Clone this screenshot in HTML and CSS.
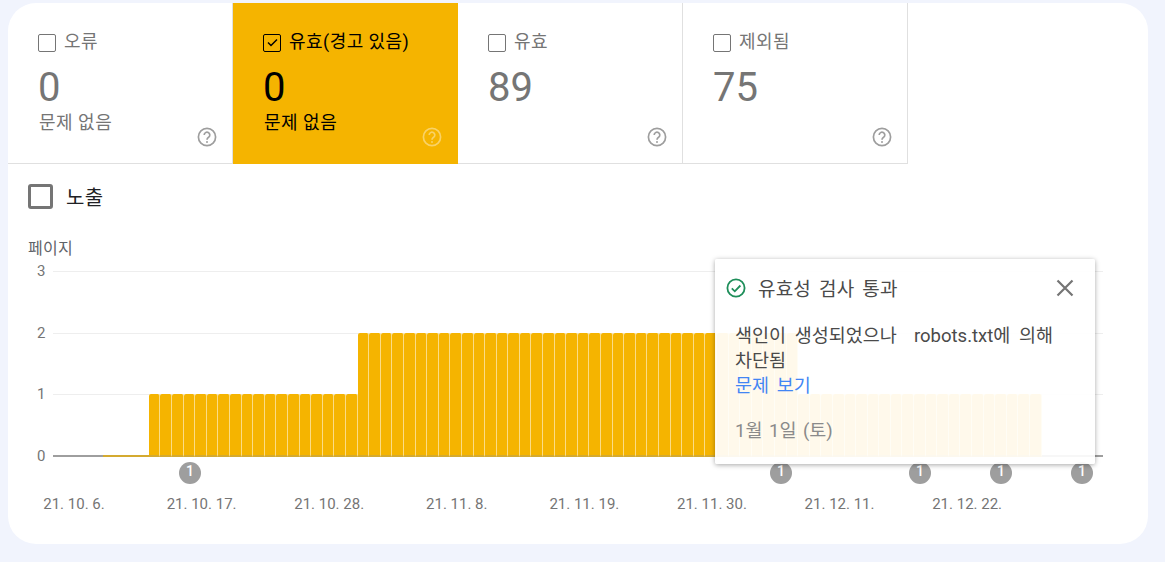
FILE: index.html
```html
<!DOCTYPE html>
<html lang="ko">
<head>
    <meta charset="UTF-8">
    <title>색인 생성 범위</title>
    <link rel="stylesheet" href="styles.css">
</head>
<body>
    <main class="report-card">
        <section class="tiles">
            <div class="tile">
                <div class="tile-title"><span class="check"></span>오류</div>
                <div class="tile-count">0</div>
                <div class="tile-note">문제 없음</div>
                <svg class="help" viewBox="0 0 20 20"><circle cx="10" cy="10" r="8.6"/><path d="M7.2 8a2.8 2.8 0 1 1 4.4 2.3c-1 .7-1.6 1.2-1.6 2.4"/><circle class="dot" cx="10" cy="15" r="1"/></svg>
            </div>
            <div class="tile tile-active">
                <div class="tile-title"><span class="check"><svg viewBox="0 0 15 15"><path d="M3 7.5l3 3 6-6"/></svg></span>유효(경고 있음)</div>
                <div class="tile-count">0</div>
                <div class="tile-note">문제 없음</div>
                <svg class="help" viewBox="0 0 20 20"><circle cx="10" cy="10" r="8.6"/><path d="M7.2 8a2.8 2.8 0 1 1 4.4 2.3c-1 .7-1.6 1.2-1.6 2.4"/><circle class="dot" cx="10" cy="15" r="1"/></svg>
            </div>
            <div class="tile">
                <div class="tile-title"><span class="check"></span>유효</div>
                <div class="tile-count">89</div>
                <svg class="help" viewBox="0 0 20 20"><circle cx="10" cy="10" r="8.6"/><path d="M7.2 8a2.8 2.8 0 1 1 4.4 2.3c-1 .7-1.6 1.2-1.6 2.4"/><circle class="dot" cx="10" cy="15" r="1"/></svg>
            </div>
            <div class="tile">
                <div class="tile-title"><span class="check"></span>제외됨</div>
                <div class="tile-count">75</div>
                <svg class="help" viewBox="0 0 20 20"><circle cx="10" cy="10" r="8.6"/><path d="M7.2 8a2.8 2.8 0 1 1 4.4 2.3c-1 .7-1.6 1.2-1.6 2.4"/><circle class="dot" cx="10" cy="15" r="1"/></svg>
            </div>
        </section>

        <label class="metric"><span class="metric-box"></span>노출</label>

        <section class="chart">
            <div class="axis-title">페이지</div>
            <div class="chart-body">
                <div class="y-labels">
                    <span>3</span>
                    <span>2</span>
                    <span>1</span>
                    <span>0</span>
                </div>
                <div class="plot">
                    <div class="grid-row"></div>
                    <div class="grid-row"></div>
                    <div class="grid-row"></div>
                    <div class="bars">
                        <i class="bar flat"></i><i class="bar flat"></i><i class="bar flat"></i><i class="bar flat"></i>
                        <i class="bar one"></i><i class="bar one"></i><i class="bar one"></i><i class="bar one"></i><i class="bar one"></i><i class="bar one"></i>
                        <i class="bar one"></i><i class="bar one"></i><i class="bar one"></i><i class="bar one"></i><i class="bar one"></i><i class="bar one"></i>
                        <i class="bar one"></i><i class="bar one"></i><i class="bar one"></i><i class="bar one"></i><i class="bar one"></i><i class="bar one"></i>
                        <i class="bar two"></i><i class="bar two"></i><i class="bar two"></i><i class="bar two"></i><i class="bar two"></i><i class="bar two"></i><i class="bar two"></i><i class="bar two"></i>
                        <i class="bar two"></i><i class="bar two"></i><i class="bar two"></i><i class="bar two"></i><i class="bar two"></i><i class="bar two"></i><i class="bar two"></i><i class="bar two"></i>
                        <i class="bar two"></i><i class="bar two"></i><i class="bar two"></i><i class="bar two"></i><i class="bar two"></i><i class="bar two"></i><i class="bar two"></i><i class="bar two"></i>
                        <i class="bar two"></i><i class="bar two"></i><i class="bar two"></i><i class="bar two"></i><i class="bar two"></i><i class="bar two"></i><i class="bar two"></i><i class="bar two"></i>
                        <i class="bar two"></i><i class="bar two"></i><i class="bar two"></i><i class="bar two"></i><i class="bar two"></i><i class="bar two"></i>
                        <i class="bar one"></i><i class="bar one"></i><i class="bar one"></i><i class="bar one"></i><i class="bar one"></i><i class="bar one"></i><i class="bar one"></i>
                        <i class="bar one"></i><i class="bar one"></i><i class="bar one"></i><i class="bar one"></i><i class="bar one"></i><i class="bar one"></i><i class="bar one"></i>
                        <i class="bar one"></i><i class="bar one"></i><i class="bar one"></i><i class="bar one"></i><i class="bar one"></i><i class="bar one"></i><i class="bar one"></i>
                    </div>
                </div>
            </div>
            <div class="markers">
                <span class="marker" style="left: 171px">1</span>
                <span class="marker" style="left: 762px">1</span>
                <span class="marker" style="left: 901px">1</span>
                <span class="marker" style="left: 982px">1</span>
                <span class="marker" style="left: 1063px">1</span>
            </div>
            <div class="x-labels">
                <span>21. 10. 6.</span>
                <span>21. 10. 17.</span>
                <span>21. 10. 28.</span>
                <span>21. 11. 8.</span>
                <span>21. 11. 19.</span>
                <span>21. 11. 30.</span>
                <span>21. 12. 11.</span>
                <span>21. 12. 22.</span>
            </div>
        </section>

        <aside class="popup">
            <div class="popup-head">
                <svg class="popup-ok" viewBox="0 0 20 20"><circle cx="10" cy="10" r="8.6"/><path d="M5.8 10.3l3 3 5.6-5.8"/></svg>
                <span class="popup-title">유효성 검사 통과</span>
                <svg class="popup-close" viewBox="0 0 20 20"><path d="M2.5 2.5l15 15M17.5 2.5l-15 15"/></svg>
            </div>
            <p class="popup-text">색인이 생성되었으나&nbsp; robots.txt에 의해 차단됨</p>
            <a class="popup-link" href="#">문제 보기</a>
            <div class="popup-date">1월 1일 (토)</div>
        </aside>
    </main>
</body>
</html>
```

FILE: styles.css
```css
* {
    box-sizing: border-box;
}

body {
    margin: 0;
    padding: 3px 17px 18px 8px;
    background-color: #f1f4fd;
    font-family: Roboto, "Noto Sans CJK KR", sans-serif;
    color: #757575;
}

.report-card {
    position: relative;
    height: 541px;
    background-color: #fff;
    border-radius: 28px;
    overflow: hidden;
}

.tiles {
    display: flex;
}

.tile {
    position: relative;
    width: 225px;
    height: 161px;
    padding: 25px 0 0 30px;
    border-right: 1px solid #e0e0e0;
    border-bottom: 1px solid #e0e0e0;
}

.tile-active {
    background-color: #f5b400;
    color: #000;
    border-color: #f5b400;
}

.tile-title {
    display: flex;
    align-items: center;
    height: 24px;
    font-size: 18px;
    letter-spacing: 0.45px;
}

.check {
    width: 18px;
    height: 18px;
    margin: 5px 8px 0 0;
    border: 1.5px solid #757575;
    border-radius: 2px;
}

.tile-active .check {
    border-color: #000;
}

.check svg {
    display: block;
    width: 15px;
    height: 15px;
    margin: 0.5px;
    fill: none;
    stroke: #000;
    stroke-width: 1.5;
}

.tile-count {
    margin-top: 13px;
    font-size: 40px;
    line-height: 46px;
}

.tile-note {
    margin-left: 1px;
    font-size: 18px;
    line-height: 24px;
    letter-spacing: 0.5px;
}

.help {
    position: absolute;
    right: 15px;
    bottom: 16px;
    width: 20px;
    height: 20px;
    fill: none;
    stroke: #9e9e9e;
    stroke-width: 1.7;
}

.help .dot {
    fill: #9e9e9e;
    stroke: none;
}

.tile-active .help {
    stroke: rgba(255, 255, 255, 0.4);
}

.tile-active .help .dot {
    fill: rgba(255, 255, 255, 0.4);
}

.metric {
    display: flex;
    align-items: center;
    gap: 13px;
    height: 25px;
    margin: 20px 0 0 20px;
    font-size: 20px;
    letter-spacing: 0.4px;
    color: #202124;
}

.metric-box {
    width: 25px;
    height: 25px;
    border: 3px solid #757575;
    border-radius: 3px;
}

.chart {
    margin-top: 30px;
}

.axis-title {
    margin-left: 20px;
    font-size: 16px;
    line-height: 20px;
    letter-spacing: 0.3px;
    color: #5f6368;
}

.chart-body {
    display: flex;
    margin-top: 12px;
}

.y-labels {
    display: flex;
    flex-direction: column;
    justify-content: space-between;
    width: 45px;
    height: 184.5px;
    padding-left: 29px;
    font-size: 15px;
}

.y-labels span {
    height: 0;
    line-height: 0;
}

.plot {
    position: relative;
    width: 1050px;
    height: 186px;
    border-bottom: 2px solid #9e9e9e;
}

.grid-row {
    height: 61.5px;
    border-top: 1px solid #eeeeee;
}

.bars {
    position: absolute;
    left: 49.5px;
    bottom: -2px;
    display: flex;
    align-items: flex-end;
}

.bar {
    flex: 0 0 11.6px;
    background-color: #f5b400;
    border-right: 1px solid #fbdc85;
    border-bottom: 2px solid #d4aa30;
    border-radius: 2px 2px 0 0;
}

.bar.flat {
    height: 2px;
    border-right: 0;
    border-radius: 0;
}

.bar.one {
    height: 63px;
}

.bar.two {
    height: 124.5px;
}

.markers {
    position: relative;
    height: 22px;
    margin-top: 5px;
}

.marker {
    position: absolute;
    top: 0;
    width: 22px;
    height: 22px;
    border-radius: 50%;
    background-color: #9e9e9e;
    color: #fff;
    font-size: 14px;
    font-weight: 500;
    line-height: 19px;
    text-align: center;
}

.x-labels {
    display: flex;
    margin: 10px 0 0 2.2px;
    font-size: 15px;
    line-height: 20px;
}

.x-labels span {
    flex: 0 0 127.6px;
    text-align: center;
}

.popup {
    position: absolute;
    left: 707px;
    top: 256px;
    width: 380px;
    height: 205px;
    padding: 0 30px 0 20px;
    background-color: rgba(255, 255, 255, 0.92);
    border-radius: 2px;
    box-shadow: 0 1px 5px rgba(0, 0, 0, 0.35);
    color: #4a4a4a;
}

.popup-head {
    display: flex;
    align-items: center;
    height: 57px;
    margin: 0 -19px 0 -9px;
}

.popup-ok {
    width: 20px;
    height: 20px;
    fill: none;
    stroke: #1e8e5a;
    stroke-width: 1.8;
}

.popup-title {
    margin-left: 12px;
    font-size: 19px;
    letter-spacing: 0.2px;
    word-spacing: 3px;
}

.popup-close {
    width: 20px;
    height: 20px;
    margin-left: auto;
    margin-right: 9px;
    fill: none;
    stroke: #757575;
    stroke-width: 2.2;
}

.popup-text {
    margin: 8px 0 0;
    font-size: 18.5px;
    line-height: 25px;
    word-spacing: 4px;
}

.popup-link {
    display: block;
    font-size: 18.5px;
    line-height: 25px;
    word-spacing: 3px;
    color: #4285f4;
    text-decoration: none;
}

.popup-date {
    margin-top: 20px;
    font-size: 18.5px;
    line-height: 25px;
    word-spacing: 2px;
    color: #8a8a8a;
}
```
